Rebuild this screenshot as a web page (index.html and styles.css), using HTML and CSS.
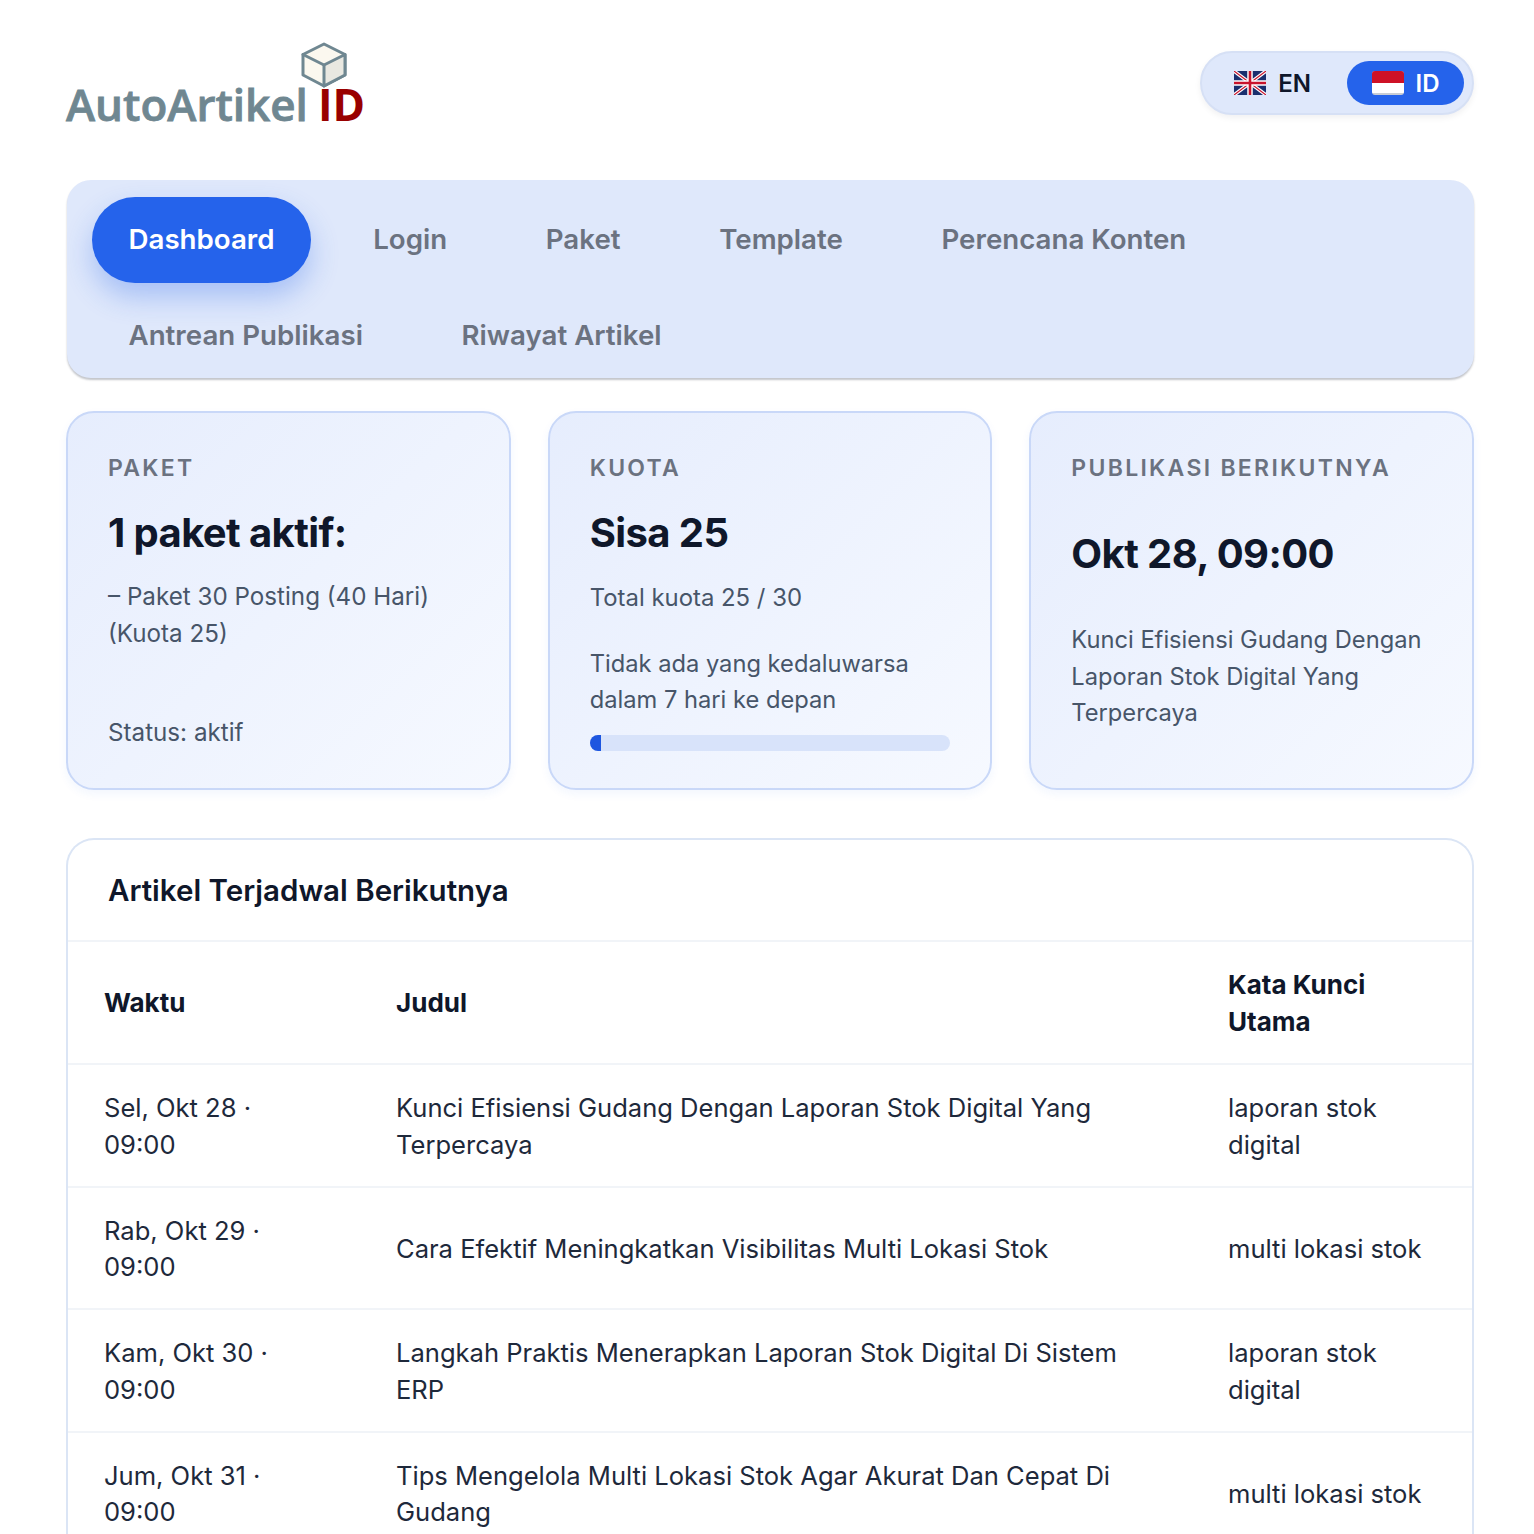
FILE: index.html
```html
<!DOCTYPE html>
<html lang="id">
<head>
  <meta charset="UTF-8">
  <title>AutoArtikel ID</title>
  <link rel="stylesheet" href="styles.css">
</head>
<body>
  <div class="page">

    <!-- Header -->
    <header class="top">
      <div class="logo">
        <svg class="logo-cube" viewBox="0 0 48 46" width="48" height="46">
          <path d="M24 2 L45 12.5 V33 L24 44 L3 33 V12.5 Z" fill="#fbf8ef" stroke="#6f8791" stroke-width="3" stroke-linejoin="round"/>
          <path d="M24 23 L45 12.5 V33 L24 44 Z" fill="#e9e8e1" stroke="#6f8791" stroke-width="3" stroke-linejoin="round"/>
          <path d="M3 12.5 L24 23" fill="none" stroke="#6f8791" stroke-width="3" stroke-linecap="round"/>
        </svg>
        <span class="logo-name">AutoArtikel</span>
        <span class="logo-id">ID</span>
      </div>

      <div class="lang">
        <button class="lang-btn">
          <svg class="flag" viewBox="0 0 32 24" width="32" height="24">
            <rect width="32" height="24" rx="3" fill="#1a2f6e"/>
            <path d="M0 0 L32 24 M32 0 L0 24" stroke="#fff" stroke-width="3.5"/>
            <path d="M0 0 L32 24 M32 0 L0 24" stroke="#c8142c" stroke-width="1.2"/>
            <path d="M16 0 V24 M0 12 H32" stroke="#fff" stroke-width="5.5"/>
            <path d="M16 0 V24 M0 12 H32" stroke="#c8142c" stroke-width="2.6"/>
          </svg>
          EN
        </button>
        <button class="lang-btn active">
          <svg class="flag" viewBox="0 0 32 24" width="32" height="24">
            <rect width="32" height="24" rx="3" fill="#c9cdd4"/>
            <path d="M0 12 H32 V21 Q32 22 31 22 H1 Q0 22 0 21 Z" fill="#fff"/>
            <path d="M3 0 H29 Q32 0 32 3 V12 H0 V3 Q0 0 3 0 Z" fill="#ce1126"/>
          </svg>
          ID
        </button>
      </div>
    </header>

    <!-- Nav -->
    <nav class="nav">
      <a class="nav-item active">Dashboard</a>
      <a class="nav-item">Login</a>
      <a class="nav-item">Paket</a>
      <a class="nav-item">Template</a>
      <a class="nav-item">Perencana Konten</a>
      <a class="nav-item">Antrean Publikasi</a>
      <a class="nav-item">Riwayat Artikel</a>
    </nav>

    <!-- Summary cards -->
    <section class="cards">
      <div class="card card-plan">
        <div class="card-label">PAKET</div>
        <div class="card-value">1 paket aktif:</div>
        <div class="card-text">– Paket 30 Posting (40 Hari)<br>(Kuota 25)</div>
        <div class="card-text card-status">Status: aktif</div>
      </div>
      <div class="card">
        <div class="card-label">KUOTA</div>
        <div class="card-value">Sisa 25</div>
        <div class="card-text card-total">Total kuota 25 / 30</div>
        <div class="card-text card-expiry">Tidak ada yang kedaluwarsa dalam 7 hari ke depan</div>
        <div class="progress"><div class="progress-fill"></div></div>
      </div>
      <div class="card">
        <div class="card-label">PUBLIKASI BERIKUTNYA</div>
        <div class="card-value card-value-next">Okt 28, 09:00</div>
        <div class="card-text">Kunci Efisiensi Gudang Dengan Laporan Stok Digital Yang Terpercaya</div>
      </div>
    </section>

    <!-- Schedule -->
    <section class="panel">
      <h2 class="panel-title">Artikel Terjadwal Berikutnya</h2>
      <table class="schedule">
        <colgroup>
          <col class="col-time">
          <col class="col-title">
          <col class="col-key">
        </colgroup>
        <thead>
          <tr>
            <th>Waktu</th>
            <th>Judul</th>
            <th>Kata Kunci Utama</th>
          </tr>
        </thead>
        <tbody>
          <tr>
            <td>Sel, Okt 28 · 09:00</td>
            <td>Kunci Efisiensi Gudang Dengan Laporan Stok Digital Yang Terpercaya</td>
            <td>laporan stok digital</td>
          </tr>
          <tr>
            <td>Rab, Okt 29 · 09:00</td>
            <td>Cara Efektif Meningkatkan Visibilitas Multi Lokasi Stok</td>
            <td>multi lokasi stok</td>
          </tr>
          <tr>
            <td>Kam, Okt 30 · 09:00</td>
            <td>Langkah Praktis Menerapkan Laporan Stok Digital Di Sistem ERP</td>
            <td>laporan stok digital</td>
          </tr>
          <tr>
            <td>Jum, Okt 31 · 09:00</td>
            <td>Tips Mengelola Multi Lokasi Stok Agar Akurat Dan Cepat Di Gudang</td>
            <td>multi lokasi stok</td>
          </tr>
        </tbody>
      </table>
    </section>

  </div>
</body>
</html>
```

FILE: styles.css
```css
* {
  box-sizing: border-box;
}

html, body {
  margin: 0;
  height: 100%;
  overflow: hidden;
  background: #fff;
}

body {
  font-family: Inter, "Liberation Sans", sans-serif;
  color: #0f172a;
}

.page {
  padding: 42px 60px 0 66px;
}

/* Header */
.top {
  display: flex;
  justify-content: space-between;
  align-items: flex-start;
  height: 138px;
}

.logo {
  position: relative;
  display: flex;
  align-items: baseline;
  gap: 10px;
  padding-top: 35px;
  font-family: "Open Sans", sans-serif;
  font-size: 44px;
  line-height: 54px;
  font-weight: 600;
}

.logo-name {
  color: #6f8791;
  -webkit-text-stroke: 0.8px #6f8791;
}

.logo-id {
  color: #990000;
  font-weight: 700;
}

.logo-cube {
  position: absolute;
  left: 234px;
  top: 0;
}

.lang {
  display: flex;
  gap: 36px;
  align-items: center;
  height: 64px;
  margin-top: 9px;
  padding: 0 8px 0 24px;
  background: #dfe8fb;
  border: 2px solid #d6e0f5;
  border-radius: 32px;
  box-shadow: 0 3px 6px rgba(15, 23, 42, 0.06);
}

.lang-btn {
  display: flex;
  align-items: center;
  gap: 12px;
  height: 44px;
  padding: 0 0 0 8px;
  border: none;
  background: none;
  font-family: inherit;
  font-size: 24px;
  font-weight: 600;
  color: #0f172a;
}

.lang-btn.active {
  padding: 0 24.5px;
  background: #2563eb;
  border-radius: 22px;
  color: #fff;
}

.flag {
  display: block;
}

/* Nav */
.nav {
  display: flex;
  flex-wrap: wrap;
  gap: 10px 25.6px;
  height: 197.5px;
  margin-left: 1px;
  padding: 17px 25px;
  background: #dfe8fb;
  border-radius: 24px;
  box-shadow: 0 2px 2px rgba(15, 23, 42, 0.25);
}

.nav-item {
  height: 86px;
  padding: 0 36.5px;
  border-radius: 43px;
  font-size: 27.7px;
  line-height: 85px;
  font-weight: 600;
  color: #6b7280;
}

.nav-item.active {
  background: #2563eb;
  color: #fff;
  box-shadow: 0 14px 28px rgba(37, 99, 235, 0.3);
}

/* Cards */
.cards {
  display: grid;
  grid-template-columns: repeat(3, 1fr);
  gap: 37px;
  margin-top: 33.5px;
}

.card {
  height: 379px;
  padding: 40px 40px 0;
  background: linear-gradient(135deg, #e6edfd, #f6f9ff);
  border: 2px solid #c9d8f8;
  border-radius: 28px;
  box-shadow: 0 4px 10px rgba(37, 99, 235, 0.06);
}

.card-label {
  font-size: 23px;
  line-height: 30px;
  font-weight: 600;
  letter-spacing: 2.3px;
  color: #6b7280;
}

.card-value {
  margin-top: 24px;
  font-size: 40px;
  line-height: 52px;
  font-weight: 700;
  letter-spacing: -0.6px;
  color: #0f172a;
}

.card-value-next {
  margin-top: 45px;
}

.card-text {
  margin-top: 20px;
  font-size: 23.7px;
  line-height: 36.5px;
  color: #475569;
}

.card-plan .card-text {
  font-size: 24.2px;
}

.card-value-next + .card-text {
  margin-top: 42px;
}

.card-plan .card-status {
  margin-top: 63px;
}

.card-total {
  margin-top: 21px;
  font-size: 23.9px;
}

.card-expiry {
  margin-top: 29px;
}

.progress {
  height: 16px;
  margin-top: 16px;
  background: #d8e3fa;
  border-radius: 8px;
  overflow: hidden;
}

.progress-fill {
  width: 11px;
  height: 100%;
  background: #1d56e0;
}

/* Schedule table */
.panel {
  margin-top: 48px;
  background: #fff;
  border: 2px solid #dbe5f5;
  border-bottom: none;
  border-radius: 28px 28px 0 0;
}

.panel-title {
  margin: 0;
  padding: 31.5px 40px 31.5px;
  font-size: 29.5px;
  line-height: 37px;
  font-weight: 600;
  color: #0f172a;
}

.schedule {
  width: 100%;
  border-collapse: collapse;
  table-layout: fixed;
  font-size: 25.55px;
  line-height: 36.5px;
}

.col-time {
  width: 292px;
}

.col-key {
  width: 280px;
}

.schedule th,
.schedule td {
  padding: 25.2px 36px 22.4px;
  border-top: 2px solid #f1f4f8;
  text-align: left;
  color: #1e293b;
}

.schedule th {
  padding: 25px 36px 23px;
  font-size: 26px;
  font-weight: 700;
  color: #0f172a;
}
```
